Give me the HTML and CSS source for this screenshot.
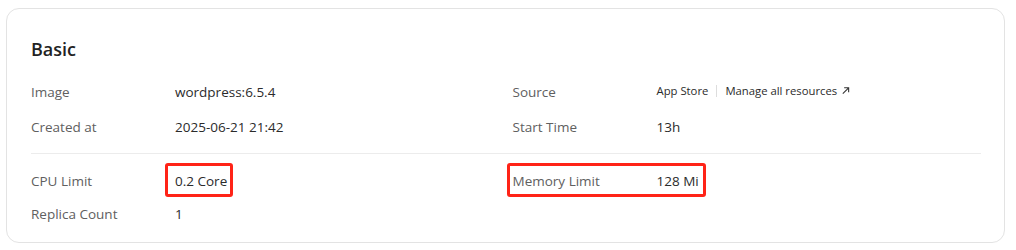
FILE: index.html
```html
<!DOCTYPE html>
<html lang="en">
<head>
    <meta charset="UTF-8">
    <meta name="viewport" content="width=device-width, initial-scale=1.0">
    <title>Basic</title>
    <link rel="stylesheet" href="styles.css">
</head>
<body>
<div class="card">
    <h2 class="title">Basic</h2>

    <div class="grid first">
        <div class="item">
            <span class="label">Image</span>
            <span class="value">wordpress:6.5.4</span>
        </div>
        <div class="item">
            <span class="label">Source</span>
            <span class="value source">
                <span>App Store</span>
                <span class="sep"></span>
                <span class="link">Manage all resources
                    <svg width="9" height="9" viewBox="0 0 10 10"><path d="M2 8.5L8.5 2M3.5 2h5v5" fill="none" stroke="#333" stroke-width="1.2"/></svg>
                </span>
            </span>
        </div>
        <div class="item">
            <span class="label">Created at</span>
            <span class="value">2025-06-21 21:42</span>
        </div>
        <div class="item">
            <span class="label">Start Time</span>
            <span class="value">13h</span>
        </div>
    </div>

    <div class="divider"></div>

    <div class="grid second">
        <div class="item">
            <span class="label">CPU Limit</span>
            <span class="value mark mark-cpu">0.2 Core</span>
        </div>
        <div class="item">
            <div class="mark mark-mem">
                <span class="label">Memory Limit</span>
                <span class="value">128 Mi</span>
            </div>
        </div>
        <div class="item">
            <span class="label">Replica Count</span>
            <span class="value">1</span>
        </div>
    </div>
</div>
</body>
</html>
```

FILE: styles.css
```css
*{
    padding: 0;
    margin: 0;
    box-sizing: border-box;
}
body{
    background-color: #fff;
    font-family: "Open Sans", "Noto Sans", sans-serif;
    color: #333;
}
.card{
    width: 999px;
    height: 235px;
    margin: 8px 0 0 6px;
    border: 1px solid #e3e3e3;
    border-radius: 13px;
    padding: 28px 24px 0 24px;
}
.title{
    font-size: 18px;
    line-height: 24px;
    font-weight: 600;
    color: #222;
}
.grid{
    display: grid;
    grid-template-columns: 1fr 1fr;
    column-gap: 14px;
}
.first{
    margin-top: 21px;
    row-gap: 15px;
}
.second{
    margin-top: 17px;
    row-gap: 13px;
}
.item{
    display: flex;
    align-items: center;
    height: 20px;
    font-size: 13.5px;
    line-height: 20px;
}
.label{
    width: 144px;
    flex-shrink: 0;
    color: #606060;
}
.value{
    color: #2b2b2b;
}
.source{
    display: flex;
    align-items: center;
    font-size: 11.3px;
    margin-top: -3px;
}
.sep{
    width: 1px;
    height: 12px;
    background-color: #ddd;
    margin: 0 8px;
}
.link svg{
    margin-left: 1px;
}
.divider{
    height: 1px;
    background-color: #ececec;
    margin-top: 16px;
    width: 950px;
}
.mark{
    position: relative;
    display: flex;
    align-items: center;
}
.mark::after{
    content: "";
    position: absolute;
    border: 3px solid #ff2317;
    border-radius: 3px;
}
.mark-cpu::after{
    top: -8px;
    bottom: -6px;
    left: -10px;
    right: -6px;
}
.mark-mem::after{
    top: -8px;
    bottom: -6px;
    left: -6px;
    right: -7px;
}
```
